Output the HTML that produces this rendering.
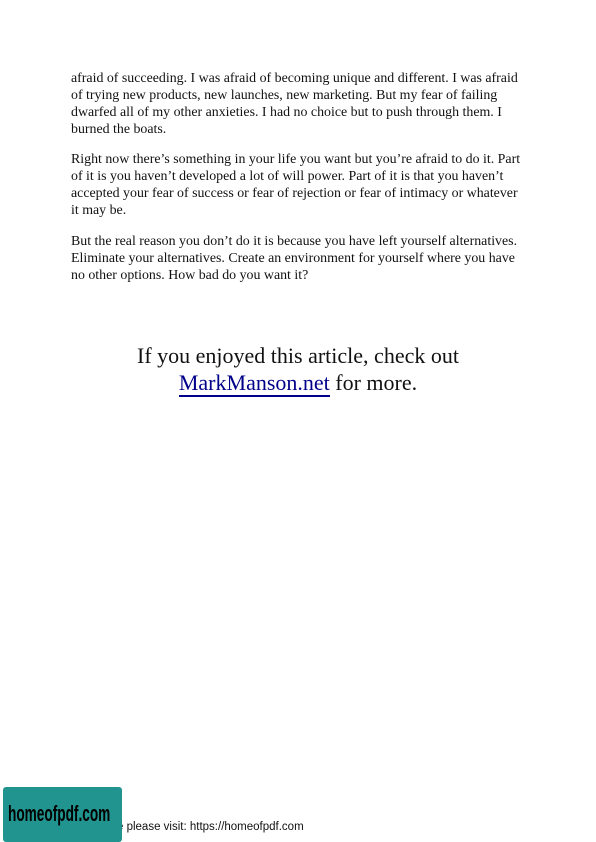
<!DOCTYPE html>
<html><head><meta charset="utf-8"><style>
html,body{margin:0;padding:0;background:#fff;width:596px;height:842px;overflow:hidden;position:relative}
.t{position:absolute;left:71px;font-family:"Liberation Serif",serif;font-size:13.9px;color:#111;white-space:nowrap;line-height:17px}
.h{position:absolute;left:0;width:596px;text-align:center;font-family:"Liberation Serif",serif;font-size:22px;color:#111;white-space:nowrap;line-height:27px}
a{color:#00008b;text-decoration:none;border-bottom:2px solid #00008b}
</style></head><body>
<div class="t" style="top:70px">afraid of succeeding. I was afraid of becoming unique and different. I was afraid<br>of trying new products, new launches, new marketing. But my fear of failing<br>dwarfed all of my other anxieties. I had no choice but to push through them. I<br>burned the boats.</div>
<div class="t" style="top:151px">Right now there’s something in your life you want but you’re afraid to do it. Part<br>of it is you haven’t developed a lot of will power. Part of it is that you haven’t<br>accepted your fear of success or fear of rejection or fear of intimacy or whatever<br>it may be.</div>
<div class="t" style="top:233px">But the real reason you don’t do it is because you have left yourself alternatives.<br>Eliminate your alternatives. Create an environment for yourself where you have<br>no other options. How bad do you want it?</div>
<div class="h" style="top:342px">If you enjoyed this article, check out<br><a>MarkManson.net</a> for more.</div>
<div style="position:absolute;left:117px;top:821px;font-family:'Liberation Sans',sans-serif;font-size:11.5px;color:#111;white-space:nowrap">e please visit: https://homeofpdf.com</div>
<div style="position:absolute;left:3px;top:787px;width:119px;height:55px;background:#21948f;border-radius:3px"></div>
<div style="position:absolute;left:8px;top:801px;font-family:'Liberation Sans',sans-serif;font-size:22px;font-weight:bold;color:#000;transform:scaleX(0.62);transform-origin:left;white-space:nowrap">homeofpdf.com</div>
</body></html>
